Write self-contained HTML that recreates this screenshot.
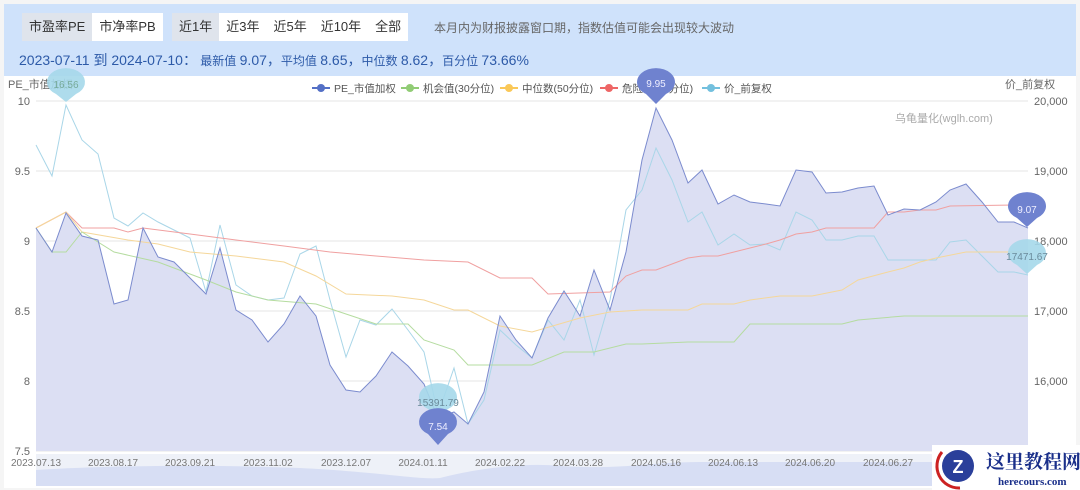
<!DOCTYPE html>
<html><head><meta charset="utf-8"><style>
body{margin:0;width:1080px;height:490px;background:#f5f5f5;font-family:"Liberation Sans","Noto Sans CJK SC",sans-serif;overflow:hidden;position:relative}
.hdr{position:absolute;left:4px;top:4px;width:1072px;height:72px;background:#cfe2fb;}
.bg{position:absolute;top:9px;height:28px;background:#fff;display:flex;font-size:13px;color:#333}
.bg span{padding:0 7px;line-height:28px}
.bg span.a{background:#dfe4ec}
.note{position:absolute;left:430px;top:15px;font-size:12px;color:#666}
.stat{position:absolute;left:15px;top:46px;font-size:14px;color:#2d5aa8}
.stat small{font-size:12px}
.chart{position:absolute;left:4px;top:76px;width:1072px;height:412px;background:#fff}
</style></head><body>
<div class="hdr">
<div class="bg" style="left:18px"><span class="a">市盈率PE</span><span>市净率PB</span></div>
<div class="bg" style="left:168px"><span class="a">近1年</span><span>近3年</span><span>近5年</span><span>近10年</span><span>全部</span></div>
<div class="note">本月内为财报披露窗口期，指数估值可能会出现较大波动</div>
<div class="stat">2023-07-11 到 2024-07-10：<small> 最新值 </small>9.07，<small>平均值 </small>8.65，<small>中位数 </small>8.62，<small>百分位 </small>73.66%</div>
</div>
<div class="chart"></div>
<svg width="1080" height="490" style="position:absolute;left:0;top:0" font-family="Liberation Sans,Noto Sans CJK SC,sans-serif">
<g stroke="#e6e6e6" stroke-width="1">
<line x1="36" y1="101" x2="1028" y2="101"/><line x1="36" y1="171" x2="1028" y2="171"/><line x1="36" y1="241" x2="1028" y2="241"/><line x1="36" y1="311" x2="1028" y2="311"/><line x1="36" y1="381" x2="1028" y2="381"/><line x1="36" y1="451" x2="1028" y2="451"/></g>
<g font-size="11" fill="#666">
<text x="30" y="105" text-anchor="end">10</text><text x="30" y="175" text-anchor="end">9.5</text><text x="30" y="245" text-anchor="end">9</text><text x="30" y="315" text-anchor="end">8.5</text><text x="30" y="385" text-anchor="end">8</text><text x="30" y="455" text-anchor="end">7.5</text>
<text x="1034" y="105">20,000</text><text x="1034" y="175">19,000</text><text x="1034" y="245">18,000</text><text x="1034" y="315">17,000</text><text x="1034" y="385">16,000</text>
<text x="8" y="88">PE_市值加权</text><text x="1005" y="88">价_前复权</text>
<text x="895" y="122" fill="#aaa">乌龟量化(wglh.com)</text>
</g>
<polygon fill="#dcdff3" points="36,451 36,228 52,252 66,213 82,236 98,240 114,304 128,300 143,228 158,257 174,262 190,278 206,294 220,248 236,310 252,320 268,342 284,324 300,296 316,316 330,365 346,390 360,392 376,376 392,352 408,366 424,384 438,418 454,412 468,424 484,392 500,316 516,340 532,358 548,318 564,291 580,316 594,270 610,310 626,252 642,160 656,108 672,140 688,183 702,170 718,204 734,195 750,202 766,204 780,206 796,170 812,172 826,193 842,192 858,188 874,186 888,215 904,209 920,210 936,202 950,190 966,184 982,202 998,222 1014,222 1028,228 1028,451"/>
<polyline fill="none" stroke="#a9d6e8" stroke-width="1" points="36,145 52,176 66,105 82,140 98,154 114,218 128,226 143,213 158,222 174,230 190,238 206,292 220,225 236,285 252,296 268,300 284,298 300,254 316,246 330,300 346,357 360,320 376,325 392,309 408,330 424,352 438,414 454,368 468,424 484,400 500,330 516,345 532,358 548,320 564,340 580,300 594,355 610,300 626,210 642,190 656,148 672,180 688,222 702,212 718,245 734,234 750,245 766,244 780,250 796,212 812,220 826,240 842,240 858,236 874,236 888,260 904,260 920,260 936,260 950,242 966,240 982,256 998,272 1014,272 1028,275"/>
<polyline fill="none" stroke="#f0a0a0" stroke-width="1" points="36,228 66,212 82,228 114,228 128,232 143,228 190,234 236,240 284,246 330,252 376,256 424,260 468,262 500,278 532,278 548,294 610,292 626,276 642,270 656,270 672,264 688,258 702,256 718,256 734,252 750,248 766,244 780,240 796,234 812,232 826,228 874,228 888,212 904,212 920,210 936,210 950,206 1014,205 1028,206"/>
<polyline fill="none" stroke="#f5d79a" stroke-width="1" points="36,228 66,212 82,232 128,240 158,244 190,252 236,256 284,262 316,276 346,294 392,296 424,300 454,310 468,310 500,326 532,332 580,318 610,312 642,310 688,310 702,304 734,304 750,300 780,296 812,296 842,290 858,280 888,272 904,268 920,262 936,258 966,252 1028,252"/>
<polyline fill="none" stroke="#b5dca0" stroke-width="1" points="36,228 52,252 66,252 82,232 114,252 158,262 206,280 236,292 268,300 316,304 346,314 376,324 408,324 424,340 454,350 468,365 500,365 532,365 564,352 594,352 626,344 642,344 688,342 734,342 750,324 842,324 858,320 904,316 1028,316"/>
<polyline fill="none" stroke="#7b8bce" stroke-width="1" points="36,228 52,252 66,213 82,236 98,240 114,304 128,300 143,228 158,257 174,262 190,278 206,294 220,248 236,310 252,320 268,342 284,324 300,296 316,316 330,365 346,390 360,392 376,376 392,352 408,366 424,384 438,418 454,412 468,424 484,392 500,316 516,340 532,358 548,318 564,291 580,316 594,270 610,310 626,252 642,160 656,108 672,140 688,183 702,170 718,204 734,195 750,202 766,204 780,206 796,170 812,172 826,193 842,192 858,188 874,186 888,215 904,209 920,210 936,202 950,190 966,184 982,202 998,222 1014,222 1028,228"/>
<g font-size="10.5" fill="#555">
<line x1="312" y1="88" x2="330" y2="88" stroke="#5470c6" stroke-width="2"/><circle cx="321" cy="88" r="4" fill="#5470c6"/><text x="334" y="92">PE_市值加权</text>
<line x1="401" y1="88" x2="419" y2="88" stroke="#91cc75" stroke-width="2"/><circle cx="410" cy="88" r="4" fill="#91cc75"/><text x="423" y="92">机会值(30分位)</text>
<line x1="500" y1="88" x2="518" y2="88" stroke="#fac858" stroke-width="2"/><circle cx="509" cy="88" r="4" fill="#fac858"/><text x="522" y="92">中位数(50分位)</text>
<line x1="600" y1="88" x2="618" y2="88" stroke="#ee6666" stroke-width="2"/><circle cx="609" cy="88" r="4" fill="#ee6666"/><text x="622" y="92">危险值(70分位)</text>
<line x1="702" y1="88" x2="720" y2="88" stroke="#73c0de" stroke-width="2"/><circle cx="711" cy="88" r="4" fill="#73c0de"/><text x="724" y="92">价_前复权</text>
</g>
<g font-size="10" fill="#eef" text-anchor="middle">
<path d="M656,104 L646,94 A19,14 0 1 1 666,94 Z" fill="#6f82cf"/><text x="656" y="87">9.95</text>
<path d="M1027,227 L1017,218 A19,14 0 1 1 1037,218 Z" fill="#6f82cf"/><text x="1027" y="213">9.07</text>
<path d="M66,102 L56,94 A19,14 0 1 1 76,94 Z" fill="#a5d8ea" opacity=".9"/><text x="66" y="88" fill="#7a9">16.56</text>
<path d="M1027,274 L1017,265 A19,14 0 1 1 1037,265 Z" fill="#a5d8ea" opacity=".9"/><text x="1027" y="260" fill="#6a8a9a">17471.67</text>
<path d="M438,418 L428,409 A19,14 0 1 1 448,409 Z" fill="#a5d8ea" opacity=".9"/><text x="438" y="406" fill="#6a8a9a">15391.79</text>
<path d="M438,445 L428,434 A19,14 0 1 1 448,434 Z" fill="#6f82cf"/><text x="438" y="430">7.54</text>
</g>
<rect x="36" y="454" width="992" height="32" fill="#eef1f8"/>
<path d="M36,470 C100,466 200,464 300,468 C380,472 420,480 440,478 C470,470 520,462 560,466 C620,470 650,462 700,462 L1028,462 L1028,486 L36,486Z" fill="#d7def4"/>
<g font-size="10" fill="#777" text-anchor="middle">
<text x="36" y="466">2023.07.13</text><text x="113" y="466">2023.08.17</text><text x="190" y="466">2023.09.21</text><text x="268" y="466">2023.11.02</text><text x="346" y="466">2023.12.07</text><text x="423" y="466">2024.01.11</text><text x="500" y="466">2024.02.22</text><text x="578" y="466">2024.03.28</text><text x="656" y="466">2024.05.16</text><text x="733" y="466">2024.06.13</text><text x="810" y="466">2024.06.20</text><text x="888" y="466">2024.06.27</text>
</g>
<rect x="932" y="445" width="148" height="45" fill="#fff"/>
<circle cx="958" cy="466" r="16" fill="#2a3f9a"/><path d="M942,452 A22,22 0 0 0 960,488" stroke="#c22" stroke-width="3" fill="none"/>
<text x="958" y="473" font-size="18" fill="#fff" text-anchor="middle" font-weight="bold">Z</text>
<text x="986" y="468" font-size="19" fill="#1a2f8a" font-family="Liberation Serif,Noto Serif CJK SC,serif" font-weight="bold">这里教程网</text>
<text x="998" y="485" font-size="11" fill="#1a2f8a" font-family="Liberation Serif,serif" font-weight="bold">herecours.com</text>
</svg>
</body></html>
